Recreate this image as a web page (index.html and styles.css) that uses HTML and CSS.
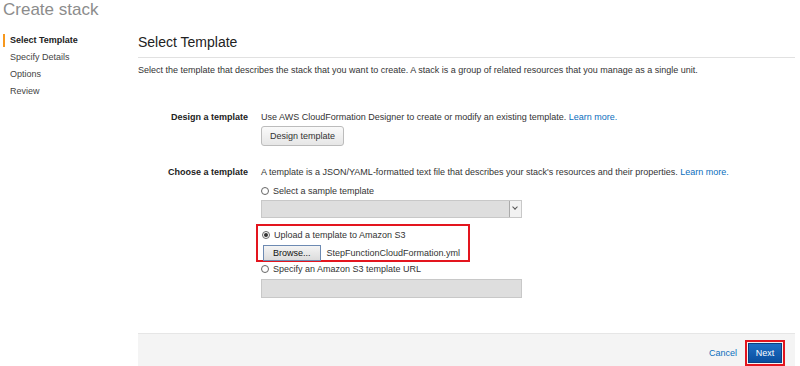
FILE: index.html
```html
<!DOCTYPE html>
<html lang="en">
  <head>
    <meta charset="UTF-8" />
    <meta name="viewport" content="width=device-width, initial-scale=1.0" />
    <title>Create stack</title>
    <link rel="stylesheet" href="styles.css">
  </head>
  <body>
    <h1 class="pageTitle">Create stack</h1>
    <div class="layout">
      <ul class="steps">
        <li class="step active">Select Template</li>
        <li class="step">Specify Details</li>
        <li class="step">Options</li>
        <li class="step">Review</li>
      </ul>
      <div class="main">
        <h2 class="heading">Select Template</h2>
        <p class="intro">
          Select the template that describes the stack that you want to create. A stack is a group of related resources that you manage as a single unit.
        </p>

        <div class="row design">
          <div class="label">Design a template</div>
          <div class="field">
            <div class="help">
              Use AWS CloudFormation Designer to create or modify an existing template.
              <a href="#">Learn more.</a>
            </div>
            <button class="btn">Design template</button>
          </div>
        </div>

        <div class="row choose">
          <div class="label">Choose a template</div>
          <div class="field">
            <div class="help">
              A template is a JSON/YAML-formatted text file that describes your stack's resources and their properties.
              <a href="#">Learn more.</a>
            </div>
            <label class="radio"><span class="dot"></span>Select a sample template</label>
            <div class="select"><span class="caret"></span></div>
            <div class="highlight">
              <label class="radio"><span class="dot checked"></span>Upload a template to Amazon S3</label>
              <div class="upload">
                <span class="browse">Browse...</span>
                <span class="fileName">StepFunctionCloudFormation.yml</span>
              </div>
            </div>
            <label class="radio"><span class="dot"></span>Specify an Amazon S3 template URL</label>
            <div class="urlInput"></div>
          </div>
        </div>

        <div class="footer">
          <a href="#" class="cancel">Cancel</a>
          <span class="nextWrap"><button class="next">Next</button></span>
        </div>
      </div>
    </div>
  </body>
</html>
```

FILE: styles.css
```css
* {
  margin: 0px;
  padding: 0px;
  box-sizing: border-box;
}
body {
  font-family: "Liberation Sans", Arial, sans-serif;
  font-size: 9px;
  color: #333;
  background-color: #fff;
  width: 800px;
  height: 366px;
  overflow: hidden;
}
a {
  color: #0a6ebd;
  text-decoration: none;
}
.pageTitle {
  font-size: 17px;
  font-weight: normal;
  color: #8c8c8c;
  line-height: 20px;
  padding-left: 3px;
}
.layout {
  display: flex;
  margin-top: 8px;
}
.steps {
  list-style: none;
  width: 138px;
  flex-shrink: 0;
  padding-top: 4px;
}
.step {
  height: 17px;
  line-height: 17px;
  padding-left: 10px;
  color: #444;
}
.step.active {
  font-weight: bold;
  color: #222;
  margin-left: 3px;
  padding-left: 5px;
  border-left: 2px solid #f7981d;
  line-height: 13px;
  height: 13px;
  margin-top: 2px;
  margin-bottom: 2px;
}
.main {
  flex: 1;
  margin-right: 5px;
}
.heading {
  font-size: 14px;
  font-weight: normal;
  color: #222;
  line-height: 18px;
  padding-top: 5px;
  padding-bottom: 6px;
  border-bottom: 1px solid #e1e1e1;
}
.intro {
  margin-top: 6px;
  line-height: 12px;
}
.row {
  display: flex;
}
.design {
  margin-top: 35px;
}
.choose {
  margin-top: 20px;
}
.label {
  width: 123px;
  flex-shrink: 0;
  text-align: right;
  padding-right: 13px;
  font-weight: bold;
  color: #222;
  line-height: 12px;
}
.field {
  flex: 1;
}
.help {
  line-height: 12px;
}
.btn {
  margin-top: 3px;
  height: 20px;
  padding: 0 8px;
  font-family: inherit;
  font-size: 9px;
  color: #333;
  background: linear-gradient(#fafafa, #e6e6e6);
  border: 1px solid #bcbcbc;
  border-radius: 3px;
}
.radio {
  display: flex;
  align-items: center;
  height: 12px;
  line-height: 12px;
}
.choose .field > .radio:first-of-type {
  margin-top: 7px;
}
.dot {
  width: 8px;
  height: 8px;
  border: 1px solid #666;
  border-radius: 50%;
  margin-right: 4px;
  display: inline-flex;
  align-items: center;
  justify-content: center;
}
.dot.checked::after {
  content: "";
  width: 4px;
  height: 4px;
  border-radius: 50%;
  background-color: #333;
}
.select {
  width: 261px;
  height: 18px;
  margin-top: 3px;
  background-color: #dedede;
  border: 1px solid #c8c8c8;
  position: relative;
}
.caret {
  position: absolute;
  right: 0;
  top: 0;
  width: 12px;
  height: 16px;
  background-color: #f2f2f2;
  border-left: 1px solid #aaa;
}
.caret::after {
  content: "";
  position: absolute;
  left: 3px;
  top: 4px;
  width: 3px;
  height: 3px;
  border-right: 1px solid #555;
  border-bottom: 1px solid #555;
  transform: rotate(45deg);
}
.highlight {
  width: 214px;
  height: 38px;
  margin-top: 6px;
  margin-left: -5px;
  border: 2px solid #e3151e;
  padding: 3px 0 0 4px;
}
.upload {
  display: flex;
  align-items: center;
  margin-top: 4px;
}
.browse {
  display: inline-block;
  height: 16px;
  line-height: 14px;
  padding: 0 9px;
  border: 1px solid #6d8ab2;
  background: linear-gradient(#f4f4f4, #dcdcdc);
  color: #111;
  margin-left: 1px;
  margin-right: 6px;
}
.fileName {
  color: #333;
}
.highlight + .radio {
  margin-top: 1px;
}
.urlInput {
  width: 261px;
  height: 19px;
  margin-top: 4px;
  background-color: #dedede;
  border: 1px solid #c8c8c8;
}
.footer {
  margin-top: 35px;
  height: 40px;
  background-color: #f4f4f4;
  border-top: 1px solid #e6e6e6;
  display: flex;
  justify-content: flex-end;
  align-items: center;
  padding-right: 10px;
  padding-bottom: 2px;
}
.cancel {
  margin-right: 8px;
}
.nextWrap {
  display: inline-block;
  border: 2px solid #e3151e;
  padding: 1px;
}
.next {
  display: block;
  width: 34px;
  height: 20px;
  font-family: inherit;
  font-size: 9px;
  color: #fff;
  background: linear-gradient(#1f6fc5, #0a4f9f);
  border: 1px solid #0b3f80;
}
```
